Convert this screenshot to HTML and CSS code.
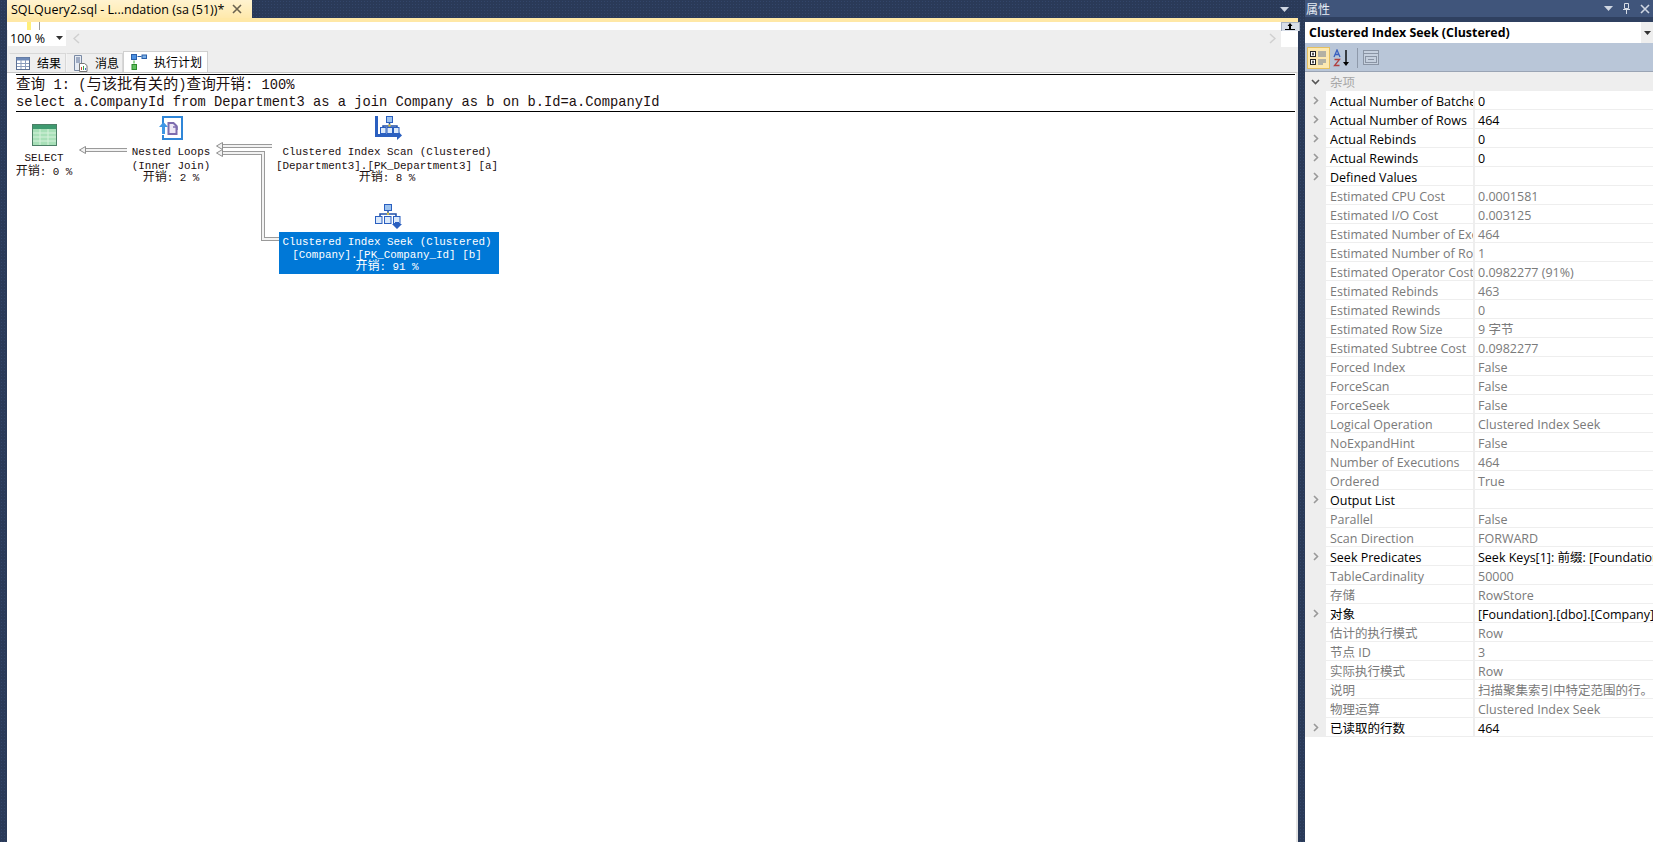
FILE: index.html
```html
<!DOCTYPE html>
<html lang="zh">
<head>
<meta charset="utf-8">
<title>SQLQuery2.sql</title>
<link rel="stylesheet" href="styles.css">
</head>
<body>
<div class="app">
  <main class="editor">
    <div class="docstrip">
      <div class="doctab"><span>SQLQuery2.sql - L...ndation (sa (51))*</span><svg class="doctab-x" width="10" height="10" viewBox="0 0 10 10"><path d="M1 1l8 8M9 1l-8 8" stroke="#6b6350" stroke-width="1.6" fill="none"/></svg></div>
      <svg class="strip-menu" width="9" height="5" viewBox="0 0 9 5"><path d="M0 0h9L4.500 5z" fill="#cfd6e2"/></svg>
    </div>
    <div class="stripe"></div>
    <div class="ruler">
      <i class="ruler-mark"></i><i class="ruler-line"></i>
      <div class="split-btn"><svg width="10" height="7" viewBox="0 0 10 7"><path d="M0 6h10v1H0zM4 3h2v3H4zM2.500 3h5L5 0z" fill="#000"/></svg></div>
    </div>
    <div class="zoombar">
      <div class="zoombox"><span>100 %</span><svg width="7" height="4" viewBox="0 0 7 4"><path d="M0 0h7L3.500 4z" fill="#333"/></svg></div>
      <svg class="chev chev-l" width="7" height="11" viewBox="0 0 7 11"><path d="M6 1L1 5.500 6 10" stroke="#d0d0d0" stroke-width="1.500" fill="none"/></svg>
      <svg class="chev chev-r" width="7" height="11" viewBox="0 0 7 11"><path d="M1 1l5 4.500L1 10" stroke="#d0d0d0" stroke-width="1.500" fill="none"/></svg>
    </div>
    <div class="tabs">
      <div class="tab">
        <svg width="14" height="13" viewBox="0 0 14 13"><rect x=".5" y=".5" width="13" height="12" fill="#fff" stroke="#5a6f94"/><path d="M.5 .5h13v3H.5z" fill="#6f8ab8"/><path d="M5 3v9M9.500 3v9M1 6.500h12M1 9.500h12" stroke="#8a9cbc"/></svg>
        <span>结果</span>
      </div>
      <div class="tab">
        <svg width="15" height="17" viewBox="0 0 15 17"><path d="M1.500 .5h7v15h-7z" fill="#e6ebf3" stroke="#7a8aa4"/><path d="M3 3h4M3 5h4M3 7h4" stroke="#5a6f94"/><path d="M6.500 8.500h5l2.500 2v6h-7.500z" fill="#fff" stroke="#777"/><path d="M8 12h1v3H8z" fill="#d04a30"/><path d="M10 11h1v4h-1z" fill="#3f9e46"/><path d="M12 13h1v2h-1z" fill="#3a72c4"/></svg>
        <span>消息</span>
      </div>
      <div class="tab tab-on">
        <svg width="16" height="16" viewBox="0 0 16 16"><rect x=".5" y=".5" width="5" height="5" fill="#4a90e2" stroke="#2a5ea8"/><rect x="11" y="1" width="4.500" height="3.500" fill="#7ab0e8" stroke="#2a5ea8"/><path d="M6.500 2.500h4" stroke="#2a5ea8"/><path d="M3 6.500v3" stroke="#3a3"/><rect x="1" y="10.500" width="4.500" height="5" fill="#5ec05e" stroke="#2d8a2d"/></svg>
        <span>执行计划</span>
      </div>
    </div>
    <section class="plan">
      <div class="query">
        <p class="qline qline-first"><span class="cjk">查询</span> 1: (<span class="cjk cjk-w">与该批有关的</span>)<span class="cjk">查询开销</span>: 100%</p>
        <p class="qline">select a.CompanyId from Department3 as a join Company as b on b.Id=a.CompanyId</p>
      </div>
      <div class="canvas">
        <svg class="links" width="520" height="170" viewBox="0 0 520 170">
          <g fill="none" stroke="#9a9a9a" stroke-width="4">
            <path d="M127 38H84"/><path d="M272 34H221"/><path d="M279 127H263V41H221"/>
          </g>
          <g fill="none" stroke="#f2f2f2" stroke-width="2">
            <path d="M127 38H84"/><path d="M272 34H221"/><path d="M279 127H263V41H221"/>
          </g>
          <g fill="#f2f2f2" stroke="#8f8f8f">
            <path d="M79.500 38l6-3.500v7z"/><path d="M216.500 34l6-3.500v7z"/><path d="M216.500 41l6-3.500v7z"/>
          </g>
        </svg>

        <div class="node node-select">
          <svg class="ico" width="25" height="22" viewBox="0 0 25 22"><rect width="25" height="22" fill="#4c7f66"/><rect x="1" y="1" width="23" height="4" fill="#3f9a70"/><rect x="1" y="5" width="23" height="16" fill="#a8e0b8"/><path d="M1 9h23M1 13h23M1 17h23M8 5v16M16 5v16" stroke="#d6f2dc"/></svg>
          <p class="nl nl-a">SELECT</p>
          <p class="nl"><span class="cjk-n">开销</span>: 0 %</p>
        </div>

        <div class="node node-loop">
          <svg class="ico" width="24" height="24" viewBox="0 0 24 24"><path d="M4 8V1h19v22H4v-4" fill="#fff" stroke="#2f86d8" stroke-width="2"/><path d="M9.500 7h5l3 3v8h-8z" fill="#ece7f4" stroke="#7d6cae" stroke-width="2"/><path d="M14 11h4v3" fill="none" stroke="#7d6cae" stroke-width="1.500"/><path d="M4.500 6L0 11h3v7h3v-7h3z" fill="#3f97e4"/></svg>
          <p class="nl nl-a">Nested Loops</p>
          <p class="nl nl-b">(Inner Join)</p>
          <p class="nl nl-c"><span class="cjk-n">开销</span>: 2 %</p>
        </div>

        <div class="node node-scan">
          <svg class="ico" width="28" height="24" viewBox="0 0 28 24"><path d="M1.500 0v19.500H22" fill="none" stroke="#2a5fc0" stroke-width="3"/><path d="M22 14l5 5.500-5 4.500z" fill="#2a5fc0"/><rect x="11.500" y=".5" width="6" height="6" fill="#9cc2ee" stroke="#2a5fc0"/><path d="M14.500 7v3M8 12v-2h14v2" fill="none" stroke="#1f4fa8" stroke-width="1.500"/><circle cx="14.500" cy="9.500" r="1.200" fill="#d8c040"/><rect x="5.500" y="11.500" width="5.500" height="6" fill="#dbe9fa" stroke="#2a5fc0"/><rect x="12" y="11.500" width="5.500" height="6" fill="#dbe9fa" stroke="#2a5fc0"/><rect x="18.500" y="11.500" width="5.500" height="6" fill="#dbe9fa" stroke="#2a5fc0"/></svg>
          <p class="nl nl-a">Clustered Index Scan (Clustered)</p>
          <p class="nl nl-b">[Department3].[PK_Department3] [a]</p>
          <p class="nl nl-c"><span class="cjk-n">开销</span>: 8 %</p>
        </div>

        <div class="node node-seek">
          <svg class="ico" width="27" height="25" viewBox="0 0 27 25"><rect x="9.500" y=".5" width="7" height="6" fill="#9cc2ee" stroke="#2a5fc0"/><path d="M13 7v3M5 13v-3h16v3" fill="none" stroke="#1f4fa8" stroke-width="1.500"/><circle cx="13" cy="9.800" r="1.200" fill="#d8c040"/><rect x=".5" y="12.500" width="6.500" height="7" fill="#dbe9fa" stroke="#2a5fc0"/><rect x="9.500" y="12.500" width="6.500" height="7" fill="#dbe9fa" stroke="#2a5fc0"/><rect x="18.500" y="12.500" width="6.500" height="7" fill="#dbe9fa" stroke="#2a5fc0"/><path d="M20 18h4v2h3l-5 5-5-5h3z" fill="#2a5fc0"/></svg>
          <div class="node-label">
            <p class="nl nl-a">Clustered Index Seek (Clustered)</p>
            <p class="nl nl-b">[Company].[PK_Company_Id] [b]</p>
            <p class="nl nl-c"><span class="cjk-n">开销</span>: 91 %</p>
          </div>
        </div>
      </div>
    </section>
  </main>

  <aside class="props">
    <header class="props-title">
      <span>属性</span>
      <svg width="9" height="5" viewBox="0 0 9 5"><path d="M0 0h9L4.500 5z" fill="#cfd6e2"/></svg>
      <svg width="9" height="11" viewBox="0 0 9 11"><path d="M2.500 .5h4v5h-4zM1 6.500h7M4.500 7v4" fill="none" stroke="#d6dce6"/></svg>
      <svg width="10" height="10" viewBox="0 0 10 10"><path d="M1 1l8 8M9 1l-8 8" stroke="#cfd6e2" stroke-width="1.600"/></svg>
    </header>
    <div class="props-combo">
      <b>Clustered Index Seek (Clustered)</b>
      <div class="combo-arrow"><svg width="7" height="4" viewBox="0 0 7 4"><path d="M0 0h7L3.500 4z" fill="#333"/></svg></div>
    </div>
    <div class="props-tools">
      <div class="tool tool-on"><svg width="18" height="16" viewBox="0 0 18 16"><rect x=".5" y="1.500" width="5" height="5" fill="#fff" stroke="#222"/><rect x=".5" y="9.500" width="5" height="5" fill="#fff" stroke="#222"/><path d="M2 4h2M2 12h2M3 10.500v3M3 2.500v3" stroke="#222"/><path d="M8 2h8M8 4h8M8 6h8M8 10h8M8 12h8M8 14h5" stroke="#6a7a98"/></svg></div>
      <div class="tool tool-az"><svg width="18" height="18" viewBox="0 0 18 18"><path d="M1 8l3-7 3 7M2 5.500h4" fill="none" stroke="#3a5fc0" stroke-width="1.300"/><path d="M1.500 10.500h5l-5 6h5" fill="none" stroke="#b04040" stroke-width="1.300"/><path d="M13 1v14" stroke="#000" stroke-width="1.400"/><path d="M10 13h6l-3 4z" fill="#000"/></svg></div>
      <i class="tool-sep"></i>
      <div class="tool"><svg width="16" height="15" viewBox="0 0 16 15"><rect x=".5" y=".5" width="15" height="14" fill="#c6d0de" stroke="#8a94a4"/><path d="M.5 3.500h15" stroke="#8a94a4"/><rect x="2.500" y="6.500" width="11" height="6" fill="none" stroke="#8a94a4"/><path d="M5 9.500h6" stroke="#8a94a4"/></svg></div>
    </div>
    <div class="grid">
      <div class="row row-head"><svg class="tw" width="9" height="6" viewBox="0 0 9 6"><path d="M1 1l3.500 3.500L8 1" fill="none" stroke="#555" stroke-width="1.600"/></svg><span class="k">杂项</span></div>
      <div class="row on"><svg class="tw" width="6" height="9" viewBox="0 0 6 9"><path d="M1 1l3.500 3.500L1 8" fill="none" stroke="#999" stroke-width="1.600"/></svg><span class="k">Actual Number of Batches</span><span class="v">0</span></div>
      <div class="row on"><svg class="tw" width="6" height="9" viewBox="0 0 6 9"><path d="M1 1l3.500 3.500L1 8" fill="none" stroke="#999" stroke-width="1.600"/></svg><span class="k">Actual Number of Rows</span><span class="v">464</span></div>
      <div class="row on"><svg class="tw" width="6" height="9" viewBox="0 0 6 9"><path d="M1 1l3.500 3.500L1 8" fill="none" stroke="#999" stroke-width="1.600"/></svg><span class="k">Actual Rebinds</span><span class="v">0</span></div>
      <div class="row on"><svg class="tw" width="6" height="9" viewBox="0 0 6 9"><path d="M1 1l3.500 3.500L1 8" fill="none" stroke="#999" stroke-width="1.600"/></svg><span class="k">Actual Rewinds</span><span class="v">0</span></div>
      <div class="row on"><svg class="tw" width="6" height="9" viewBox="0 0 6 9"><path d="M1 1l3.500 3.500L1 8" fill="none" stroke="#999" stroke-width="1.600"/></svg><span class="k">Defined Values</span><span class="v"></span></div>
      <div class="row"><span class="k">Estimated CPU Cost</span><span class="v">0.0001581</span></div>
      <div class="row"><span class="k">Estimated I/O Cost</span><span class="v">0.003125</span></div>
      <div class="row"><span class="k">Estimated Number of Executions</span><span class="v">464</span></div>
      <div class="row"><span class="k">Estimated Number of Rows</span><span class="v">1</span></div>
      <div class="row"><span class="k">Estimated Operator Cost</span><span class="v">0.0982277 (91%)</span></div>
      <div class="row"><span class="k">Estimated Rebinds</span><span class="v">463</span></div>
      <div class="row"><span class="k">Estimated Rewinds</span><span class="v">0</span></div>
      <div class="row"><span class="k">Estimated Row Size</span><span class="v">9 字节</span></div>
      <div class="row"><span class="k">Estimated Subtree Cost</span><span class="v">0.0982277</span></div>
      <div class="row"><span class="k">Forced Index</span><span class="v">False</span></div>
      <div class="row"><span class="k">ForceScan</span><span class="v">False</span></div>
      <div class="row"><span class="k">ForceSeek</span><span class="v">False</span></div>
      <div class="row"><span class="k">Logical Operation</span><span class="v">Clustered Index Seek</span></div>
      <div class="row"><span class="k">NoExpandHint</span><span class="v">False</span></div>
      <div class="row"><span class="k">Number of Executions</span><span class="v">464</span></div>
      <div class="row"><span class="k">Ordered</span><span class="v">True</span></div>
      <div class="row on"><svg class="tw" width="6" height="9" viewBox="0 0 6 9"><path d="M1 1l3.500 3.500L1 8" fill="none" stroke="#999" stroke-width="1.600"/></svg><span class="k">Output List</span><span class="v"></span></div>
      <div class="row"><span class="k">Parallel</span><span class="v">False</span></div>
      <div class="row"><span class="k">Scan Direction</span><span class="v">FORWARD</span></div>
      <div class="row on"><svg class="tw" width="6" height="9" viewBox="0 0 6 9"><path d="M1 1l3.500 3.500L1 8" fill="none" stroke="#999" stroke-width="1.600"/></svg><span class="k">Seek Predicates</span><span class="v">Seek Keys[1]: 前缀: [Foundation].[dbo].[Company].Id</span></div>
      <div class="row"><span class="k">TableCardinality</span><span class="v">50000</span></div>
      <div class="row"><span class="k">存储</span><span class="v">RowStore</span></div>
      <div class="row on"><svg class="tw" width="6" height="9" viewBox="0 0 6 9"><path d="M1 1l3.500 3.500L1 8" fill="none" stroke="#999" stroke-width="1.600"/></svg><span class="k">对象</span><span class="v">[Foundation].[dbo].[Company].[PK_Company_Id]</span></div>
      <div class="row"><span class="k">估计的执行模式</span><span class="v">Row</span></div>
      <div class="row"><span class="k">节点 ID</span><span class="v">3</span></div>
      <div class="row"><span class="k">实际执行模式</span><span class="v">Row</span></div>
      <div class="row"><span class="k">说明</span><span class="v">扫描聚集索引中特定范围的行。</span></div>
      <div class="row"><span class="k">物理运算</span><span class="v">Clustered Index Seek</span></div>
      <div class="row on"><svg class="tw" width="6" height="9" viewBox="0 0 6 9"><path d="M1 1l3.500 3.500L1 8" fill="none" stroke="#999" stroke-width="1.600"/></svg><span class="k">已读取的行数</span><span class="v">464</span></div>
    </div>
  </aside>
</div>
</body>
</html>
```
FILE: styles.css
```css
* { box-sizing: border-box; }
html, body { margin: 0; height: 100%; overflow: hidden; }
body {
  font-family: "Open Sans", "Noto Sans CJK SC", sans-serif;
  font-size: 12.5px;
  color: #000;
  background-color: #2a3a58;
  background-image: radial-gradient(#33466a 1px, transparent 1px);
  background-size: 3px 3px;
}
p { margin: 0; }
svg { display: block; flex: none; }
.app { display: flex; height: 842px; }

/* document column */
.editor { width: 1291px; margin-left: 7px; flex: none; display: flex; flex-direction: column; }
.docstrip { height: 18px; flex: none; display: flex; align-items: center; justify-content: space-between; padding-right: 9px; }
.doctab {
  width: 245px; height: 18px; padding-left: 4px; display: flex; align-items: center; gap: 8px;
  background: linear-gradient(#fff3d0, #ffe9ac);
  font-size: 12.500px; white-space: nowrap;
}
.stripe { height: 4px; flex: none; background: #ffe8a6; }
.ruler { height: 8px; background: #fff; position: relative; flex: none; }
.ruler-mark { position: absolute; left: 20px; top: 0; width: 4px; height: 8px; background: #ffef7a; }
.ruler-line { position: absolute; left: 32px; top: 0; width: 1px; height: 8px; background: #999; }
.split-btn { position: absolute; right: 0; top: 0; width: 17px; height: 25px; background: #fff; z-index: 1; }
.split-btn::before { content: ""; position: absolute; left: 0; top: 0; width: 17px; height: 8px; background: #d8dee8; border: 1px solid #a8b2c2; border-bottom: 0; }
.split-btn svg { position: relative; margin: 0 auto; top: 1px; }
.zoombar { height: 21px; background: #eee; display: flex; align-items: flex-start; padding: 0 22px 0 1px; flex: none; }
.zoombox { width: 58px; height: 16px; background: #fff; display: flex; align-items: center; justify-content: space-between; padding: 0 3px 0 2px; font-size: 12.500px; }
.chev { margin-top: 3px; }
.chev-l { margin-left: 7px; }
.chev-r { margin-left: auto; }
.tabs { height: 21px; background: #eee; display: flex; align-items: flex-end; padding-left: 2px; flex: none; }
.tab {
  width: 57px; height: 19px; flex: none; display: flex; align-items: center; gap: 7px; padding-left: 6px;
  background: #efefef; border: 1px solid #d8d8d8; border-bottom: 0; border-left-color: #f4f4f4;
  font-size: 12px; white-space: nowrap;
}
.tab-on { width: 85px; height: 21px; background: #fff; padding-left: 7px; border-color: #d0d0d0; }
.plan { flex: 1; background: #fff; border-top: 1px solid #c8c8c8; border-right: 2px solid #e4e4e4; display: flex; flex-direction: column; min-height: 0; }
.query { margin: 1px 1px 0 9px; border-top: 1px solid #000; border-bottom: 1px solid #000; height: 38px; flex: none; }
.qline { font-family: "Liberation Mono", "Noto Sans CJK SC", monospace; font-size: 13.750px; height: 19px; line-height: 21px; white-space: nowrap; color: #1c1010; }
.qline-first { height: 17px; line-height: 15px; }
.cjk { font-family: "Noto Sans CJK SC", sans-serif; font-size: 14.600px; line-height: 1; }
.cjk-w { font-size: 15.300px; }
.cjk-n { font-family: "Noto Sans CJK SC", sans-serif; font-size: 12px; line-height: 1; }
.canvas { flex: 1; position: relative; margin-left: -7px; }

/* plan nodes: free-canvas items */
.links { position: absolute; left: 0; top: 0; pointer-events: none; }
.node { position: absolute; display: flex; flex-direction: column; align-items: center; font-family: "Liberation Mono", "Noto Sans CJK SC", monospace; font-size: 10.900px; white-space: nowrap; color: #1c1010; }
.nl { height: 12px; line-height: 12px; text-align: center; }
.nl-c { margin-top: -2px; }
.node-select { left: 4px; top: 12px; width: 80px; }
.node-select .ico { margin-bottom: 6px; }
.node-loop { left: 111px; top: 4px; width: 120px; }
.node-loop .ico { margin-bottom: 6px; }
.node-loop .nl-a { margin-bottom: 2px; }
.node-scan { left: 277px; top: 4px; width: 220px; }
.node-scan .ico { margin: 0 0 6px 4px; }
.node-scan .nl-a { margin-bottom: 2px; }
.node-seek { left: 279px; top: 92px; width: 220px; }
.node-seek .ico { margin-left: -2px; }
.node-label { width: 220px; height: 42px; margin-top: 3px; background: #0078d7; color: #fff; display: flex; flex-direction: column; align-items: center; padding: 4px 4px 0 0; }
.node-label .nl-a { margin-bottom: 1px; }

/* properties panel */
.props { width: 348px; margin-left: 7px; flex: none; display: flex; flex-direction: column; background: #fff; }
.props-title { height: 17px; flex: none; background: #40557b; box-shadow: 0 5px 0 #2f4060; color: #e8edf5; display: flex; align-items: center; padding: 0 3px 0 1px; gap: 9px; font-size: 12px; }
.props-title span { margin-right: auto; }
.props-combo { margin-top: 5px; height: 21px; display: flex; align-items: center; justify-content: space-between; padding-left: 4px; background: #fff; font-size: 12.400px; flex: none; position: relative; }
.combo-arrow { width: 12px; height: 21px; background: #eee; display: flex; align-items: center; justify-content: center; }
.props-tools { height: 29px; flex: none; background: #b9c6d8; border-bottom: 1px solid #9aa4b4; display: flex; align-items: center; gap: 2px; padding: 1px 2px 0 2px; }
.tool { width: 20px; height: 22px; display: flex; align-items: center; justify-content: center; }
.tool-on { width: 23px; background: #fde9b0; border: 1px solid #e5c060; }
.tool-sep { width: 1px; height: 20px; background: #8e99aa; margin: 0 1px 0 3px; }
.grid { display: flex; flex-direction: column; }
.row { height: 19px; display: grid; grid-template-columns: 21px 149px 1fr; align-items: center; color: #7a7a7a; position: relative; }
.row .k { grid-column: 2; height: 19px; line-height: 21px; padding-left: 4px; overflow: hidden; white-space: nowrap; background: #fff; border-bottom: 1px solid #eee; border-right: 2px solid #eee; }
.row .v { grid-column: 3; height: 19px; line-height: 21px; padding-left: 3px; overflow: hidden; white-space: nowrap; background: #fff; border-bottom: 1px solid #eee; }
.row::before { content: ""; grid-column: 1; grid-row: 1; height: 19px; background: #eee; }
.row.on { color: #000; }
.tw { position: absolute; left: 8px; top: 5px; }
.row-head .k { background: #eee; border: 0; color: #a8a8a8; }
.row-head::after { content: ""; height: 19px; background: #eee; }
.row-head .tw { left: 6px; top: 7px; }
```
